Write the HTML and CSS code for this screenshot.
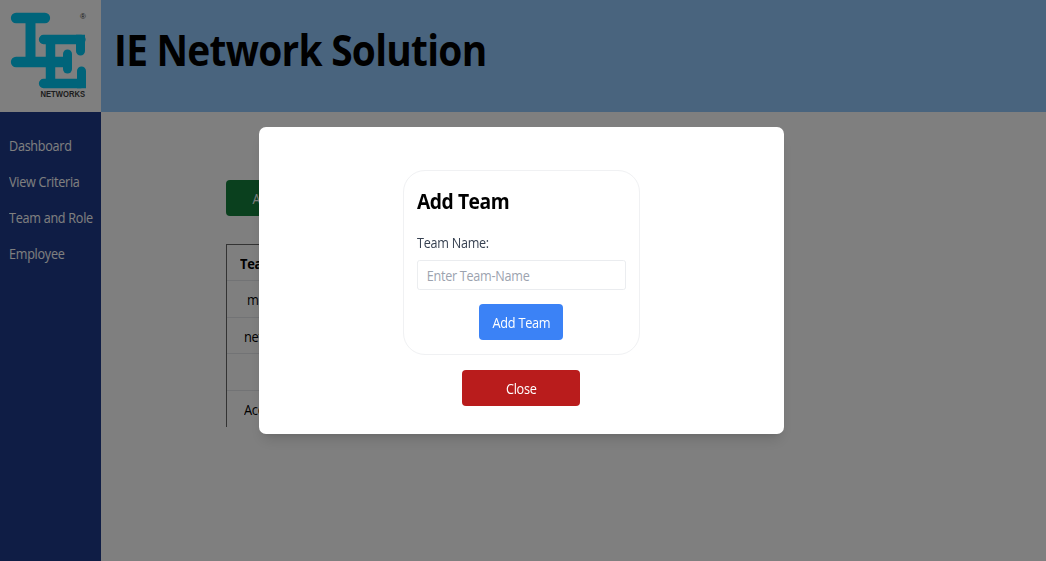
FILE: index.html
```html
<!DOCTYPE html>
<html lang="en">
<head>
<meta charset="utf-8">
<title>IE Network Solution</title>
<link rel="stylesheet" href="styles.css">
</head>
<body>
<div class="app">
  <header class="header">
    <div class="logo">
      <svg width="101" height="112" viewBox="0 0 101 112" role="img" aria-label="IE Networks">
        <g fill="none" stroke="#00c8f5" stroke-linecap="round">
          <path d="M16 18H45M16 62H66" stroke-width="10.300"/>
          <path d="M30.500 18V62" stroke-width="10" stroke-linecap="butt"/>
          <path d="M43.500 39.500H81M43.500 83.500H81" stroke-width="9.300"/>
          <path d="M50.500 39V84" stroke-width="9.500" stroke-linecap="butt"/>
          <path d="M67.500 54V69" stroke-width="9"/>
          <path d="M80.500 40V51M81.500 71V82" stroke-width="9"/>
        </g>
        <path d="M76 34.800H85V42H76ZM77 80H86V88.200H77Z" fill="#00c8f5"/>
        <text class="logo-name" x="40.500" y="97" textLength="44.500" lengthAdjust="spacingAndGlyphs">NETWORKS</text>
        <text class="logo-mark" x="80" y="19">®</text>
      </svg>
    </div>
    <h1 class="title">IE Network Solution</h1>
  </header>
  <div class="body">
    <nav class="sidebar">
      <a class="link">Dashboard</a>
      <a class="link">View Criteria</a>
      <a class="link">Team and Role</a>
      <a class="link">Employee</a>
    </nav>
    <main class="main">
      <button class="btn add"><span class="btn-text">Add Team</span></button>
      <div class="table">
        <div class="row head"><span class="cell">Team Name</span></div>
        <div class="row r1"><span class="cell">m</span></div>
        <div class="row r2"><span class="cell">net</span></div>
        <div class="row"></div>
        <div class="row r4"><span class="cell">Acc</span></div>
      </div>
    </main>
  </div>
</div>
<div class="overlay">
  <div class="modal">
    <form class="card">
      <h2 class="card-title">Add Team</h2>
      <label class="label" for="team">Team Name:</label>
      <input class="input" id="team" placeholder="Enter Team-Name">
      <button class="btn submit" type="button"><span class="btn-text">Add Team</span></button>
    </form>
    <button class="btn close"><span class="btn-text">Close</span></button>
  </div>
</div>
</body>
</html>
```
FILE: styles.css
```css
* { box-sizing: border-box; }
body {
  margin: 0;
  height: 561px;
  overflow: hidden;
  font: 14.3px/22px "Open Sans", "Noto Sans", sans-serif;
  letter-spacing: -0.3px;
}
.app { height: 561px; display: flex; flex-direction: column; background: #fff; }
.header { display: flex; height: 112px; background: #93c8fd; }
.logo { width: 101px; height: 112px; background: #fff; }
.logo svg { display: block; }
.logo-name { font: bold 9.500px "Liberation Sans", sans-serif; letter-spacing: 0; fill: #3c3c3c; }
.logo-mark { font: 8px "Liberation Sans", sans-serif; fill: #333; }
.title { margin: 20px 0 0 13px; font-size: 42.500px; line-height: 60px; font-weight: 700; letter-spacing: -0.8px; white-space: nowrap; transform: scaleX(.914); transform-origin: left; }
.body { display: flex; flex: 1; }
.sidebar { width: 101px; padding: 23px 0 0 9px; background: #1e3a8a; color: #fff; display: flex; flex-direction: column; gap: 14px; }
.link { white-space: nowrap; transform: scaleX(.882); transform-origin: left; }
.main { flex: 1; padding: 68px 0 0 125px; }
.btn { display: block; height: 36px; padding: 2px 0 0; border: 0; border-radius: 4px; color: #fff; font: inherit; letter-spacing: inherit; text-align: center; }
.btn-text { display: inline-block; transform: scaleX(.89); }
.cell { display: inline-block; transform: scaleX(.9); transform-origin: left; }
.add { width: 110px; background: #15803d; }
.table { width: 400px; margin: 28px 0 0 -0.500px; border: solid #666; border-width: 1px 1px 0; }
.row { height: 36.400px; padding: 8px 0 0 13px; border-bottom: 1px solid #e5e7eb; }
.head { font-weight: 700; }
.r1 { padding-left: 20px; }
.r2, .r4 { padding-left: 17px; }
.r4 { border-bottom: 0; }
.overlay { position: fixed; inset: 0; display: flex; align-items: center; justify-content: center; padding-right: 3px; background: rgba(0, 0, 0, .5); }
.modal { width: 525px; height: 307px; padding-top: 43px; display: flex; flex-direction: column; align-items: center; background: #fff; border-radius: 7px; box-shadow: 0 9px 14px -3px rgba(0, 0, 0, .12), 0 4px 6px -4px rgba(0, 0, 0, .12); }
.card { width: 237px; height: 185px; padding: 15px 13px 0; border: 1px solid #f0f1f3; border-radius: 22px; display: flex; flex-direction: column; }
.card-title { margin: 0; font-size: 21.300px; line-height: 29px; letter-spacing: -0.5px; transform: scaleX(.905); transform-origin: left; }
.label { margin-top: 17px; color: #374151; transform: scaleX(.882); transform-origin: left; }
.input { flex: none; width: 237px; height: 30px; margin-top: 6px; padding: 1px 10px 0; border: 1px solid #e9ebee; border-radius: 3px; font: inherit; letter-spacing: inherit; transform: scaleX(.882); transform-origin: left; }
.input::placeholder { color: #9ca3af; opacity: 1; }
.submit { width: 84px; margin: 14px 0 0 62px; background: #3b82f6; }
.close { width: 118px; margin: 15px 1px 0 0; background: #b91c1c; }
```
